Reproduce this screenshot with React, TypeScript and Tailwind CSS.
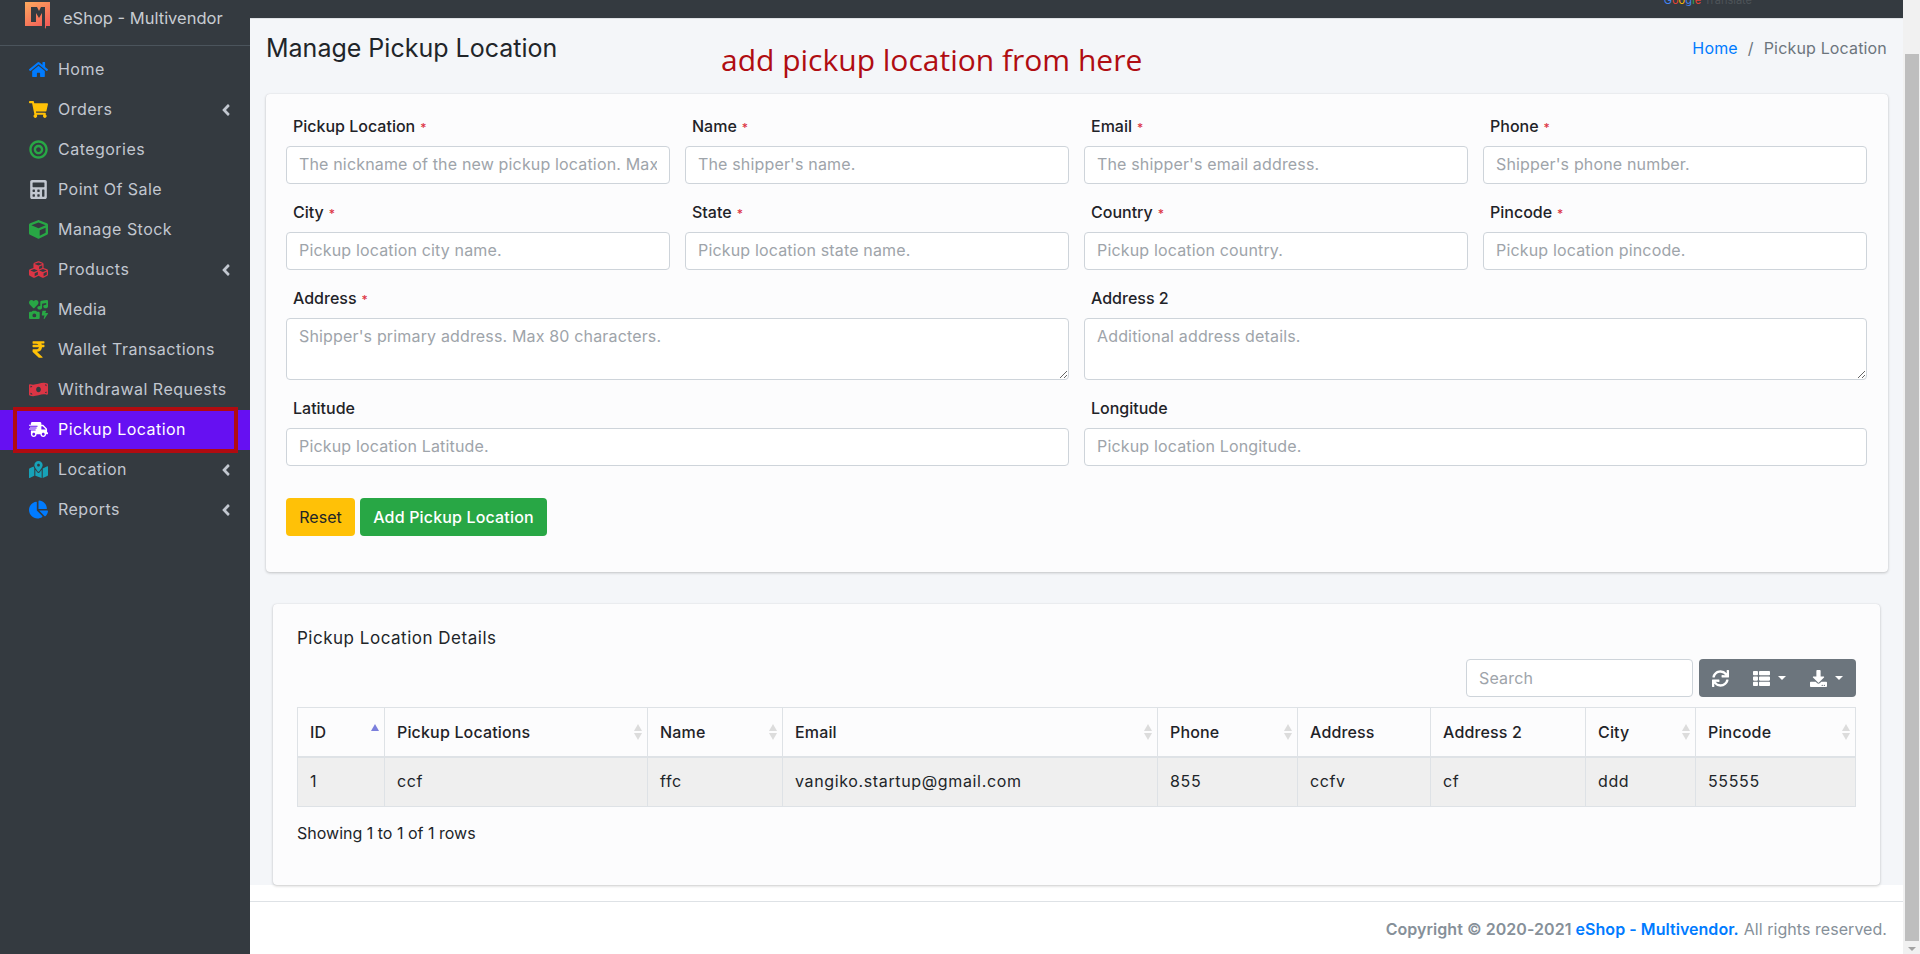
import { FaHome, FaShoppingCart, FaBullseye, FaCalculator, FaCube, FaCubes, FaIcons, FaRupeeSign, FaMoneyBillWave, FaShippingFast, FaMapMarkedAlt, FaChartPie, FaAngleLeft, FaSync, FaThList, FaDownload } from 'react-icons/fa'

// Sidebar entries
const navItems = [
  { label: 'Home', icon: FaHome, color: 'text-[#007bff]', arrow: false },
  { label: 'Orders', icon: FaShoppingCart, color: 'text-[#ffc107]', arrow: true },
  { label: 'Categories', icon: FaBullseye, color: 'text-[#28a745]', arrow: false },
  { label: 'Point Of Sale', icon: FaCalculator, color: 'text-[#c2c7d0]', arrow: false },
  { label: 'Manage Stock', icon: FaCube, color: 'text-[#28a745]', arrow: false },
  { label: 'Products', icon: FaCubes, color: 'text-[#dc3545]', arrow: true },
  { label: 'Media', icon: FaIcons, color: 'text-[#28a745]', arrow: false },
  { label: 'Wallet Transactions', icon: FaRupeeSign, color: 'text-[#ffc107]', arrow: false },
  { label: 'Withdrawal Requests', icon: FaMoneyBillWave, color: 'text-[#dc3545]', arrow: false },
  { label: 'Pickup Location', icon: FaShippingFast, color: 'text-white', arrow: false, active: true },
  { label: 'Location', icon: FaMapMarkedAlt, color: 'text-[#17a2b8]', arrow: true },
  { label: 'Reports', icon: FaChartPie, color: 'text-[#007bff]', arrow: true },
]

const columns = [
  { label: 'ID', width: 'w-[87px]', sort: 'asc', value: '1' },
  { label: 'Pickup Locations', width: 'w-[263px]', sort: 'both', value: 'ccf' },
  { label: 'Name', width: 'w-[135px]', sort: 'both', value: 'ffc' },
  { label: 'Email', width: 'w-[375px]', sort: 'both', value: 'vangiko.startup@gmail.com' },
  { label: 'Phone', width: 'w-[140px]', sort: 'both', value: '855' },
  { label: 'Address', width: 'w-[133px]', sort: 'none', value: 'ccfv' },
  { label: 'Address 2', width: 'w-[155px]', sort: 'none', value: 'cf' },
  { label: 'City', width: 'w-[110px]', sort: 'both', value: 'ddd' },
  { label: 'Pincode', width: 'flex-1', sort: 'both', value: '55555' },
]

function Logo() {
  return (
    <svg width="26" height="28" viewBox="0 0 26 28" className="shrink-0">
      <defs>
        <linearGradient id="logo-grad" x1="0" y1="0" x2="0.6" y2="1">
          <stop offset="0" stopColor="#fdaa5e" />
          <stop offset="1" stopColor="#f35f58" />
        </linearGradient>
      </defs>
      <path d="M0 0 L25 0 L25 24 L21 24 L21 27 L19 24 L0 24 Z" fill="url(#logo-grad)" />
      <path d="M6 5 L12 5 L14 9 L16 5 L20 5 L20 25 L17 25 L17 11 L14 16 L11 11 L11 20 L6 20 Z" fill="#343a40" />
    </svg>
  )
}

function SortIcon({ sort }: { sort: string }) {
  if (sort === 'none') return null
  return (
    <svg width="8" height="16" viewBox="0 0 8 16" className="shrink-0">
      <path d="M4 0 L8 7 L0 7 Z" fill={sort === 'asc' ? '#7b7fdc' : '#dcdcdc'} />
      {sort === 'both' && <path d="M4 16 L8 9 L0 9 Z" fill="#dcdcdc" />}
    </svg>
  )
}

function Field({ label, required, placeholder, multiline }: { label: string; required?: boolean; placeholder: string; multiline?: boolean }) {
  return (
    <div className="flex flex-col min-w-0">
      <label className="h-[27px] pl-[7px] text-[16px] font-medium text-[#1f2328] leading-[28px]">
        {label}
        {required && <span className="ml-[5px] text-[#dc3545] text-[12px]">*</span>}
      </label>
      {multiline ? (
        <textarea
          placeholder={placeholder}
          className="mt-[7px] h-[62px] w-full rounded border border-[#ced4da] bg-white px-3 py-[5px] text-[16px] tracking-[0.01em] placeholder:text-[#9ea4aa] outline-none"
        />
      ) : (
        <input
          type="text"
          placeholder={placeholder}
          className="mt-[7px] h-[38px] w-full rounded border border-[#ced4da] bg-white px-3 pb-[2px] text-[16px] tracking-[0.01em] placeholder:text-[#9ea4aa] outline-none"
        />
      )}
    </div>
  )
}

export default function App() {
  return (
    <div className="relative flex h-[954px] w-[1920px] overflow-hidden bg-white text-[#212529] [font-family:Inter,sans-serif]">
      {/* Sidebar */}
      <aside className="w-[250px] shrink-0 bg-[#343a40]">
        <div className="flex h-[46px] items-start gap-[12px] border-b border-[#4b545c] pl-[25px] pt-[2px]">
          <Logo />
          <span className="pt-[4px] text-[16.5px] text-[#c8ccd2]">eShop - Multivendor</span>
        </div>
        <nav className="pt-[4px]">
          {navItems.map((item) => {
            const Icon = item.icon
            return (
              <div
                key={item.label}
                className={`flex h-[40px] items-center pl-[26px] pr-[15px] ${item.active ? 'bg-[#6610f2] text-white' : 'text-[#c2c7d0]'}`}
              >
                <span className={`flex w-[24px] justify-center pb-[1px] ${item.color}`}>
                  <Icon className="text-[19px]" />
                </span>
                <span className="ml-[8px] flex-1 pb-[2px] text-[16px] tracking-[0.03em]">{item.label}</span>
                {item.arrow && <FaAngleLeft className="text-[18px] text-[#c2c7d0]" />}
              </div>
            )
          })}
        </nav>
      </aside>

      {/* Main column */}
      <div className="flex min-w-0 flex-1 flex-col">
        <div className="flex h-[19px] shrink-0 justify-end overflow-hidden border-b border-[#dee2e6] bg-[#343a40] pr-[151px]">
          <span className="-mt-[9px] text-[11px] leading-[18px] text-[#4d5358]">
            <span className="text-[#4285f4]">G</span>
            <span className="text-[#ea4335]">o</span>
            <span className="text-[#fbbc05]">o</span>
            <span className="text-[#4285f4]">g</span>
            <span className="text-[#34a853]">l</span>
            <span className="text-[#ea4335]">e</span> Translate
          </span>
        </div>

        <main className="h-[866px] shrink-0 bg-[#f4f6f9] pl-[16px] pr-[15px]">
          {/* Page header */}
          <div className="flex h-[75px] items-start pt-[13px]">
            <h1 className="w-[455px] text-[25px] leading-[32px] text-[#212529]">Manage Pickup Location</h1>
            <span className="mt-[9px] text-[30px] leading-[38px] text-[#b00d12] [font-family:'Open_Sans',sans-serif]">add pickup location from here</span>
            <div className="ml-auto flex items-center gap-[10px] pr-[1px] pt-[1px] text-[16px] tracking-[0.01em] leading-[30px]">
              <span className="text-[#007bff]">Home</span>
              <span className="text-[#6c757d]">/</span>
              <span className="text-[#6c757d]">Pickup Location</span>
            </div>
          </div>

          {/* Add form card */}
          <section className="flex h-[478px] flex-col rounded bg-[#fcfcfd] pl-[20px] pr-[21px] pt-[18px] shadow-[0_0_1px_rgba(0,0,0,0.13),0_1px_3px_rgba(0,0,0,0.2)]">
            <div className="grid grid-cols-4 gap-x-[15px] gap-y-[14px]">
              <Field label="Pickup Location" required placeholder="The nickname of the new pickup location. Max 36 characters." />
              <Field label="Name" required placeholder="The shipper's name." />
              <Field label="Email" required placeholder="The shipper's email address." />
              <Field label="Phone" required placeholder="Shipper's phone number." />
              <Field label="City" required placeholder="Pickup location city name." />
              <Field label="State" required placeholder="Pickup location state name." />
              <Field label="Country" required placeholder="Pickup location country." />
              <Field label="Pincode" required placeholder="Pickup location pincode." />
            </div>
            <div className="mt-[14px] grid grid-cols-2 gap-x-[15px] gap-y-[14px]">
              <Field label="Address" required multiline placeholder="Shipper's primary address. Max 80 characters." />
              <Field label="Address 2" multiline placeholder="Additional address details." />
              <Field label="Latitude" placeholder="Pickup location Latitude." />
              <Field label="Longitude" placeholder="Pickup location Longitude." />
            </div>
            <div className="mt-[32px] flex gap-[5px]">
              <button className="h-[38px] w-[69px] rounded bg-[#ffc107] pb-[1px] text-[16px] text-[#212529]">Reset</button>
              <button className="h-[38px] w-[187px] rounded bg-[#28a745] pb-[1px] text-[16px] font-medium tracking-[0.01em] text-white">Add Pickup Location</button>
            </div>
          </section>

          {/* Details card */}
          <section className="ml-[7px] mr-[8px] mt-[32px] h-[281px] rounded bg-[#fcfcfd] px-[22px] pt-[22px] shadow-[0_0_1px_rgba(0,0,0,0.13),0_1px_3px_rgba(0,0,0,0.2)]">
            <h2 className="pl-[2px] text-[17px] tracking-[0.03em] leading-[24px] text-[#212529]">Pickup Location Details</h2>
            <div className="mt-[9px] flex justify-end gap-[6px] pr-[2px]">
              <input
                type="text"
                placeholder="Search"
                className="h-[38px] w-[227px] rounded border border-[#ced4da] bg-white px-3 pb-[1px] text-[16px] tracking-[0.01em] placeholder:text-[#9ea4aa] outline-none"
              />
              <div className="flex h-[38px] w-[157px] items-center rounded bg-[#6c757d] pl-[13px] text-white">
                <FaSync className="text-[17px]" />
                <FaThList className="ml-[24px] text-[17px]" />
                <span className="ml-[8px] border-x-[4px] border-t-[4px] border-x-transparent border-t-white" />
                <FaDownload className="ml-[24px] text-[17px]" />
                <span className="ml-[8px] border-x-[4px] border-t-[4px] border-x-transparent border-t-white" />
              </div>
            </div>
            <div className="mx-[2px] mt-[10px] border border-[#dee2e6]">
              <div className="flex h-[50px] border-b-2 border-[#dee2e6]">
                {columns.map((c) => (
                  <div key={c.label} className={`flex items-center justify-between border-r border-[#dee2e6] pb-[1px] pl-[12px] pr-[5px] text-[16px] font-medium tracking-[0.01em] text-[#1f2328] last:border-r-0 ${c.width}`}>
                    <span>{c.label}</span>
                    <SortIcon sort={c.sort} />
                  </div>
                ))}
              </div>
              <div className="flex h-[48px] bg-[#efefef]">
                {columns.map((c) => (
                  <div key={c.label} className={`flex items-center border-r border-[#dee2e6] pb-[2px] pl-[12px] text-[16px] tracking-[0.04em] text-[#212529] last:border-r-0 ${c.width}`}>
                    {c.value}
                  </div>
                ))}
              </div>
            </div>
            <p className="mt-[16px] pl-[2px] text-[16px] leading-[20px] text-[#212529]">Showing 1 to 1 of 1 rows</p>
          </section>
        </main>

        {/* Footer */}
        <footer className="mt-[16px] flex h-[53px] items-start justify-end border-t border-[#dee2e6] bg-white pr-[16px] pt-[16px] text-[16px] tracking-[0.003em] leading-[22px] text-[#869099]">
          <strong className="font-semibold">Copyright © 2020-2021 <span className="text-[#007bff]">eShop - Multivendor.</span></strong>
          <span className="ml-[5px]">All rights reserved.</span>
        </footer>
      </div>

      {/* Window scrollbar */}
      <div className="flex w-[17px] shrink-0 flex-col bg-[#f1f1f1] pt-[54px]">
        <div className="ml-[2px] mr-[1px] h-[887px] bg-[#bebebe]" />
        <div className="mx-auto mt-[6px] border-x-[4px] border-t-[4px] border-x-transparent border-t-[#a3a3a3]" />
      </div>

      {/* Red box drawn over the sidebar entry in the screenshot */}
      <div className="absolute left-[13px] top-[407px] h-[46px] w-[225px] border-[4px] border-[#b10b10]" />
    </div>
  )
}
